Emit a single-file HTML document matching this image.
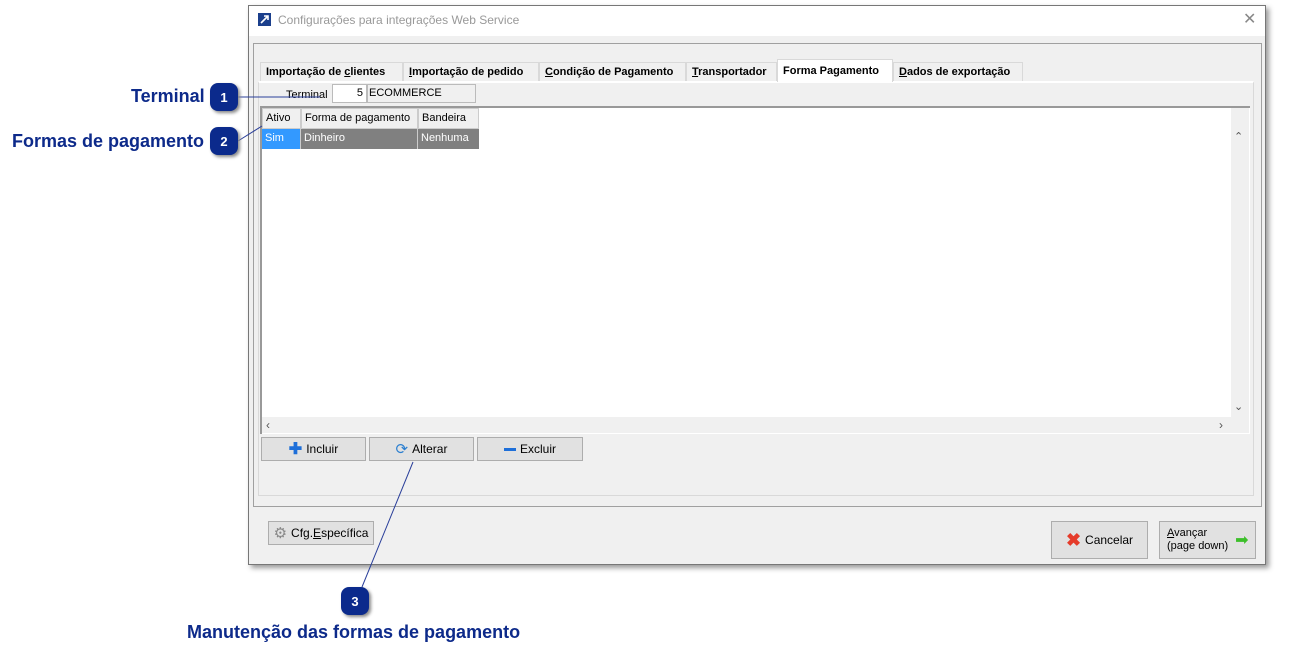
<!DOCTYPE html><html><head><style>
body{margin:0;width:1290px;height:661px;background:#fff;position:relative;font-family:"Liberation Sans",sans-serif;overflow:hidden}
.a{position:absolute}
.t{font-size:12px;color:#000}
.btn{position:absolute;background:#e1e1e1;border:1px solid #adadad;box-sizing:border-box;font-size:12px;display:flex;align-items:center;justify-content:center;gap:4px;white-space:nowrap}
.tab{position:absolute;top:62px;height:19px;border:1px solid #d9d9d9;border-bottom:none;box-sizing:border-box;font-size:11px;font-weight:bold;line-height:18px;padding:0 0 0 5px;background:#f0f0f0;white-space:nowrap;overflow:hidden}
.badge{position:absolute;width:28px;height:28px;border-radius:8px;background:#0b2a8c;color:#fff;font-size:13px;font-weight:bold;display:flex;align-items:center;justify-content:center;box-shadow:2px 2px 3px #888}
.lbl{position:absolute;color:#0d2a8a;font-weight:bold;font-size:18px;white-space:nowrap}
.cell{position:absolute;font-size:11px;line-height:19px;padding-left:3px;box-sizing:border-box;white-space:nowrap}
</style></head><body>
<div class="a" style="left:248px;top:5px;width:1018px;height:560px;background:#f0f0f0;border:1px solid #777;box-sizing:border-box;box-shadow:3px 3px 5px #999"></div>
<div class="a" style="left:249px;top:6px;width:1016px;height:30px;background:#fff"></div>
<div class="a" style="left:258px;top:13px;width:13px;height:13px;background:#1b3f8c"></div>
<svg class="a" style="left:258px;top:13px" width="13" height="13"><path d="M3 10 L10 3 M6 3 H10 V7" stroke="#fff" stroke-width="1.6" fill="none"/></svg>
<div class="a" style="left:278px;top:13px;font-size:12px;color:#999">Configurações para integrações Web Service</div>
<div class="a" style="left:1243px;top:9px;font-size:16px;color:#888">✕</div>
<div class="a" style="left:253px;top:43px;width:1009px;height:464px;border:1px solid #a0a0a0;box-sizing:border-box"></div>
<div class="a" style="left:258px;top:81px;width:996px;height:415px;border:1px solid #d9d9d9;border-top:2px solid #fff;box-sizing:border-box"></div>
<div class="tab" style="left:260px;width:143px">Importação de <u>c</u>lientes</div>
<div class="tab" style="left:403px;width:136px"><u>I</u>mportação de pedido</div>
<div class="tab" style="left:539px;width:147px"><u>C</u>ondição de Pagamento</div>
<div class="tab" style="left:686px;width:91px"><u>T</u>ransportador</div>
<div class="tab" style="left:777px;width:116px;top:59px;height:23px;background:#fff;line-height:22px">Forma Pagamento</div>
<div class="tab" style="left:893px;width:130px"><u>D</u>ados de exportação</div>
<div class="a t" style="left:286px;top:89px;font-size:11px">Terminal</div>
<div class="a" style="left:332px;top:84px;width:35px;height:19px;background:#fff;border:1px solid #bbb;box-sizing:border-box;font-size:11px;text-align:right;padding-right:3px;line-height:17px">5</div>
<div class="a" style="left:367px;top:84px;width:109px;height:19px;background:#f0f0f0;border:1px solid #bbb;box-sizing:border-box;font-size:11px;padding-left:1px;line-height:17px">ECOMMERCE</div>
<div class="a" style="left:260px;top:106px;width:990px;height:328px;background:#fff;border-top:2px solid #999;border-left:2px solid #999;box-sizing:border-box"></div>
<div class="a" style="left:1231px;top:108px;width:18px;height:309px;background:#f0f0f0"></div>
<div class="a" style="left:262px;top:417px;width:987px;height:16px;background:#f0f0f0"></div>
<div class="a" style="left:1234px;top:130px;font-size:11px;color:#555">⌃</div>
<div class="a" style="left:1234px;top:400px;font-size:11px;color:#555">⌄</div>
<div class="a" style="left:266px;top:418px;font-size:12px;color:#555">‹</div>
<div class="a" style="left:1219px;top:418px;font-size:12px;color:#555">›</div>
<div class="cell" style="left:262px;top:108px;width:39px;height:21px;background:#f0f0f0;border:1px solid #ccc">Ativo</div>
<div class="cell" style="left:301px;top:108px;width:117px;height:21px;background:#f0f0f0;border:1px solid #ccc">Forma de pagamento</div>
<div class="cell" style="left:418px;top:108px;width:61px;height:21px;background:#f0f0f0;border:1px solid #ccc">Bandeira</div>
<div class="cell" style="left:262px;top:129px;width:39px;height:20px;background:#3399ff;color:#fff;border-right:1px solid #ccc">Sim</div>
<div class="cell" style="left:301px;top:129px;width:117px;height:20px;background:#808080;color:#fff;border-right:1px solid #ccc">Dinheiro</div>
<div class="cell" style="left:418px;top:129px;width:61px;height:20px;background:#808080;color:#fff">Nenhuma</div>
<div class="btn" style="left:261px;top:437px;width:105px;height:24px"><span style="color:#1e6fd9;font-weight:bold;font-size:16px">✚</span><span>Incluir</span></div>
<div class="btn" style="left:369px;top:437px;width:105px;height:24px"><span style="color:#2b7fd0;font-size:15px">⟳</span><span>Alterar</span></div>
<div class="btn" style="left:477px;top:437px;width:106px;height:24px"><span style="display:inline-block;width:12px;height:3px;background:#1e6fd9"></span><span>Excluir</span></div>
<div class="btn" style="left:268px;top:521px;width:106px;height:24px"><span style="color:#888;font-size:15px">⚙</span><span>Cfg.<u>E</u>specífica</span></div>
<div class="btn" style="left:1051px;top:521px;width:97px;height:38px"><span style="color:#e53b2a;font-weight:bold;font-size:18px">✖</span><span>Cancelar</span></div>
<div class="btn" style="left:1159px;top:521px;width:97px;height:38px;justify-content:flex-start;padding-left:7px;line-height:13px;font-size:11px"><span><u>A</u>vançar<br>(page down)</span><span style="color:#3cbf2a;font-size:16px;margin-left:3px">➡</span></div>
<svg class="a" style="left:0;top:0" width="1290" height="661"><path d="M238 97 H320 M238 141 L262 126 M413 462 L362 587" stroke="#2a3f9a" stroke-width="1" fill="none"/></svg>
<div class="lbl" style="left:131px;top:86px">Terminal</div>
<div class="badge" style="left:210px;top:83px">1</div>
<div class="lbl" style="left:12px;top:131px">Formas de pagamento</div>
<div class="badge" style="left:210px;top:127px">2</div>
<div class="badge" style="left:341px;top:587px">3</div>
<div class="lbl" style="left:187px;top:622px">Manutenção das formas de pagamento</div>
</body></html>
